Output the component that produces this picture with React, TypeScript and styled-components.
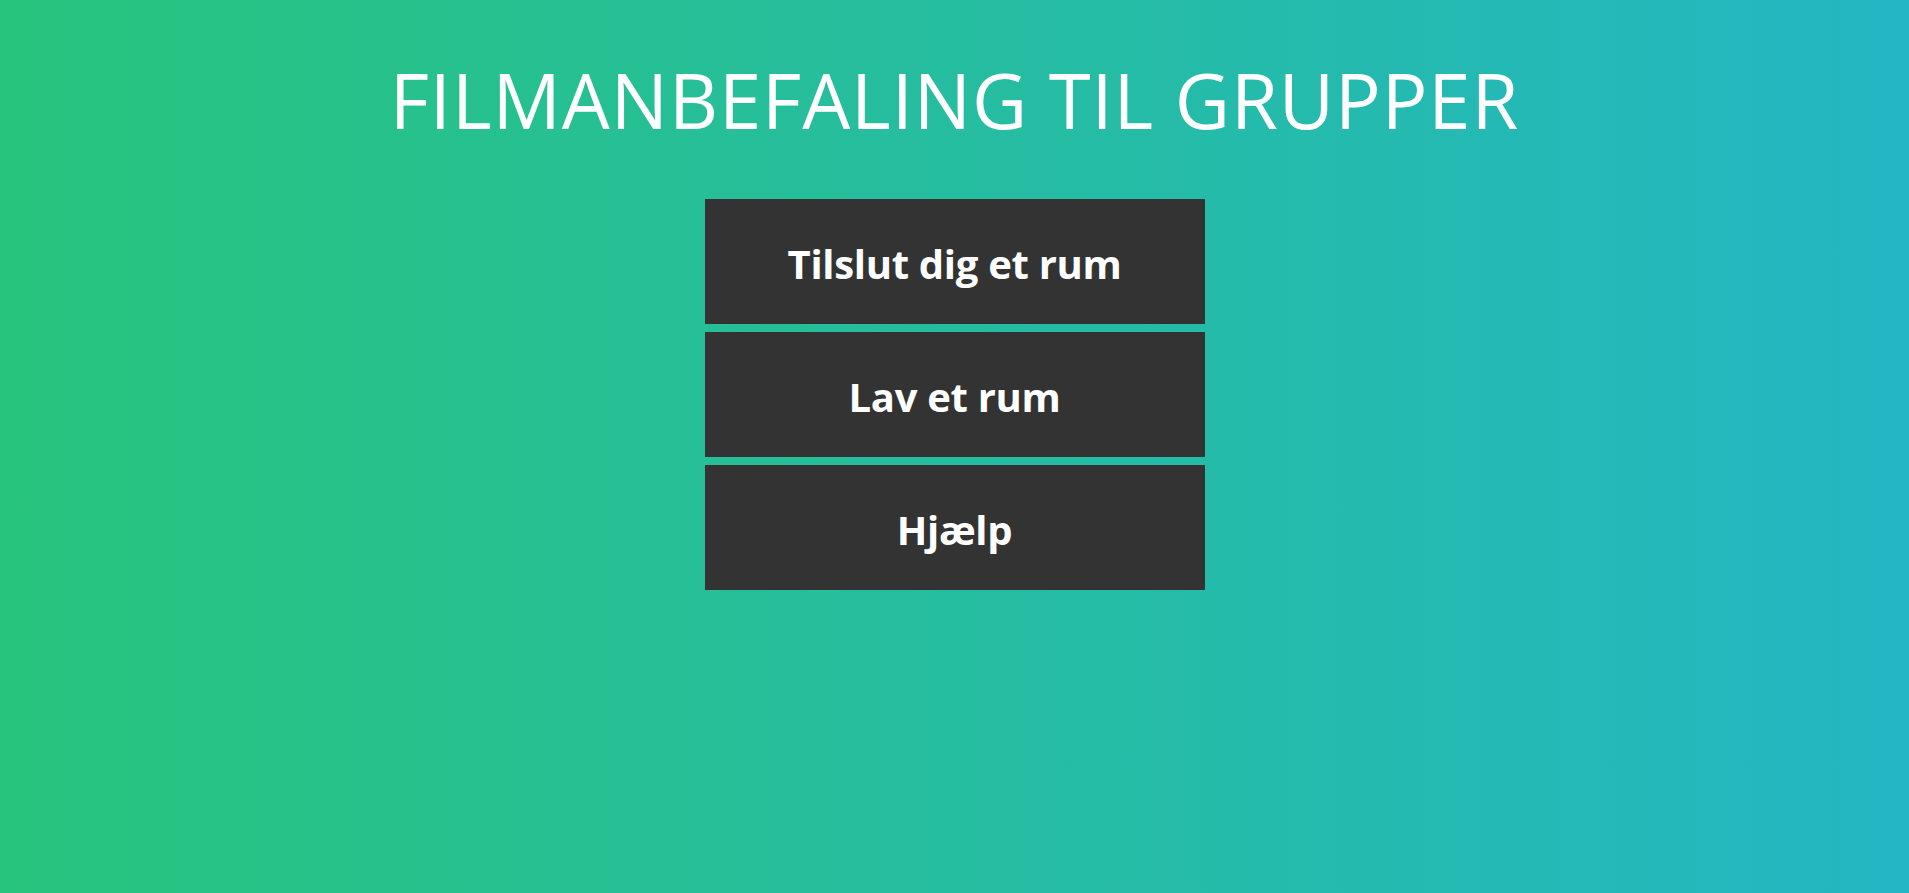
import React from "react";
import styled, { createGlobalStyle } from "styled-components";

const Global = createGlobalStyle`
  html, body { margin: 0; padding: 0; height: 100%; }
  body {
    font-family: "Open Sans", "DejaVu Sans", sans-serif;
  }
  #root { min-height: 100vh; }
`;

const Page = styled.main`
  min-height: 100vh;
  box-sizing: border-box;
  background: linear-gradient(to right, #27c47d, #24b6c3);
  display: flex;
  flex-direction: column;
  align-items: center;
  padding-top: 52px;
`;

const Title = styled.h1`
  margin: 0 0 51px;
  color: #ffffff;
  font-family: "Open Sans", sans-serif;
  font-weight: 400;
  font-size: 76px;
  line-height: 96px;
  letter-spacing: 0.9px;
`;

const Menu = styled.nav`
  display: flex;
  flex-direction: column;
  gap: 8px;
  width: 500px;
`;

const MenuButton = styled.button`
  height: 125px;
  padding: 4px 0 0;
  border: none;
  background: #333333;
  color: #ffffff;
  font-family: "Open Sans", sans-serif;
  font-weight: 700;
  font-size: 40px;
  letter-spacing: -0.3px;
  cursor: pointer;
`;

export default function App() {
  return (
    <>
      <Global />
      <Page>
        <Title>FILMANBEFALING TIL GRUPPER</Title>
        <Menu>
          <MenuButton>Tilslut dig et rum</MenuButton>
          <MenuButton>Lav et rum</MenuButton>
          <MenuButton>Hjælp</MenuButton>
        </Menu>
      </Page>
    </>
  );
}
